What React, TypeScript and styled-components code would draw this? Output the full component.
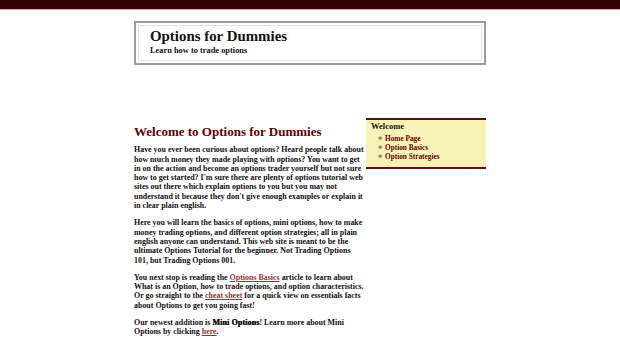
import styled, { createGlobalStyle } from 'styled-components'

const GlobalStyle = createGlobalStyle`
  html, body {
    margin: 0;
    padding: 0;
    background: #ffffff;
  }
  body {
    font-family: 'Liberation Serif', 'Times New Roman', serif;
    color: #111111;
  }
`

const TopBar = styled.div`
  height: 9px;
  background: #330000;
  border-bottom: 1px solid #f0c419;
`

const Wrapper = styled.div`
  width: 352px;
  margin: 0 auto;
`

const Header = styled.header`
  margin-top: 11px;
  border: 2px solid #9c9c9c;
  padding: 2px;
`

const HeaderInner = styled.div`
  border: 1px solid #e2e2e2;
  padding: 1.5px 11px 4px;
`

const SiteTitle = styled.h1`
  margin: 0;
  font-size: 14.9px;
  line-height: 17px;
  font-weight: bold;
  color: #111111;
`

const Tagline = styled.p`
  margin: 1.5px 0 0;
  font-size: 8.4px;
  line-height: 10px;
  font-weight: bold;
`

const Columns = styled.div`
  display: flex;
  align-items: flex-start;
  margin-top: 53px;
`

const Main = styled.main`
  width: 232px;
  flex: none;
`

const Heading = styled.h2`
  margin: 5.5px 0 6.8px;
  font-size: 13px;
  line-height: 15px;
  font-weight: bold;
  color: #660000;
`

const Para = styled.p`
  margin: 0 0 8px;
  font-size: 7.95px;
  line-height: 9.3px;
  font-weight: bold;
`

const Link = styled.a`
  color: #993333;
  text-decoration: underline;
`

const Strong = styled.strong`
  font-weight: 900;
  text-shadow: 0.35px 0 0 #111111;
  letter-spacing: 0.15px;
`

const Sidebar = styled.aside`
  width: 120px;
  flex: none;
  background: #f9f2b6;
  border-top: 2px solid #5c1010;
  border-bottom: 2px solid #5c1010;
  padding: 0.5px 5px 6.5px;
  box-sizing: border-box;
`

const SideTitle = styled.h3`
  margin: 0 0 3px;
  font-size: 8.5px;
  line-height: 10px;
  font-weight: bold;
`

const NavList = styled.ul`
  list-style: none;
  margin: 0;
  padding: 0 0 0 7px;
`

const NavItem = styled.li`
  display: flex;
  align-items: center;
  gap: 3px;
  font-size: 7.3px;
  line-height: 9px;
  font-weight: bold;
`

const Bullet = styled.span`
  color: #8c8c6c;
  font-size: 5px;
  width: 4px;
`

const NavLink = styled.a`
  color: #660000;
  text-decoration: none;
`

const navLinks = ['Home Page', 'Option Basics', 'Option Strategies']

export default function App() {
  return (
    <>
      <GlobalStyle />
      <TopBar />
      <Wrapper>
        <Header>
          <HeaderInner>
            <SiteTitle>Options for Dummies</SiteTitle>
            <Tagline>Learn how to trade options</Tagline>
          </HeaderInner>
        </Header>
        <Columns>
          <Main>
            <Heading>Welcome to Options for Dummies</Heading>
            <Para>
              Have you ever been curious about options? Heard people talk about
              how much money they made playing with options? You want to get in
              on the action and become an options trader yourself but not sure
              how to get started? I'm sure there are plenty of options tutorial
              web sites out there which explain options to you but you may not
              understand it because they don't give enough examples or explain
              it in clear plain english.
            </Para>
            <Para>
              Here you will learn the basics of options, mini options, how to
              make money trading options, and different option strategies; all
              in plain english anyone can understand. This web site is meant to
              be the ultimate Options Tutorial for the beginner. Not Trading
              Options 101, but Trading Options 001.
            </Para>
            <Para>
              You next stop is reading the <Link href="#">Options Basics</Link>{' '}
              article to learn about What is an Option, how to trade options,
              and option characteristics. Or go straight to the{' '}
              <Link href="#">cheat sheet</Link> for a quick view on essentials
              facts about Options to get you going fast!
            </Para>
            <Para>
              Our newest addition is <Strong>Mini Options</Strong>! Learn more
              about Mini Options by clicking <Link href="#">here</Link>.
            </Para>
          </Main>
          <Sidebar>
            <SideTitle>Welcome</SideTitle>
            <NavList>
              {navLinks.map((label) => (
                <NavItem key={label}>
                  <Bullet>✱</Bullet>
                  <NavLink href="#">{label}</NavLink>
                </NavItem>
              ))}
            </NavList>
          </Sidebar>
        </Columns>
      </Wrapper>
    </>
  )
}
